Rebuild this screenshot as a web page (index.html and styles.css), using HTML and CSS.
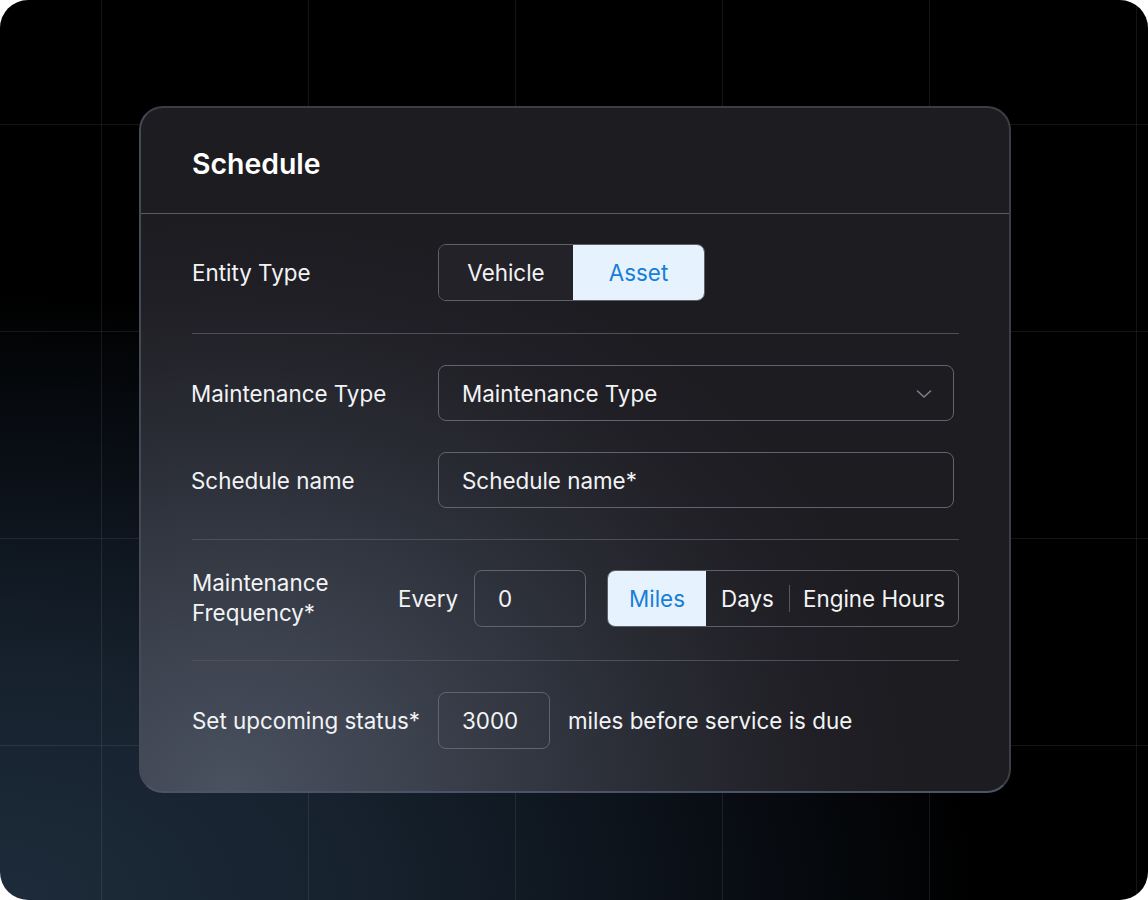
FILE: index.html
```html
<!DOCTYPE html>
<html>
<head>
<meta charset="utf-8">
<link rel="stylesheet" href="styles.css">
</head>
<body>
<div class="frame">
  <div class="card">
    <div class="card-header"><h1>Schedule</h1></div>
    <div class="card-body">
      <div class="section row">
        <div class="label">Entity Type</div>
        <div class="toggle">
          <div class="seg seg-vehicle">Vehicle</div>
          <div class="seg seg-asset active">Asset</div>
        </div>
      </div>
      <div class="section stack">
        <div class="row">
          <div class="label">Maintenance Type</div>
          <div class="field select">
            <span>Maintenance Type</span>
            <svg class="chev" width="16" height="10" viewBox="0 0 16 10"><path d="M1.5 2 L8 8 L14.5 2" fill="none" stroke="#7d7f88" stroke-width="1.6" stroke-linecap="round" stroke-linejoin="round"/></svg>
          </div>
        </div>
        <div class="row">
          <div class="label">Schedule name</div>
          <div class="field"><span>Schedule name*</span></div>
        </div>
      </div>
      <div class="section row freq">
        <div class="label label-freq">Maintenance<br>Frequency*</div>
        <div class="every">Every</div>
        <div class="field small"><span>0</span></div>
        <div class="units">
          <div class="unit active miles">Miles</div>
          <div class="unit days">Days</div>
          <div class="unit-sep"></div>
          <div class="unit hours">Engine Hours</div>
        </div>
      </div>
      <div class="section row last">
        <div class="label label-status">Set upcoming status*</div>
        <div class="field small"><span>3000</span></div>
        <div class="suffix">miles before service is due</div>
      </div>
    </div>
  </div>
</div>
</body>
</html>
```

FILE: styles.css
```css
* { box-sizing: border-box; }
html, body { margin: 0; padding: 0; background: #ffffff; }
body { font-family: Inter, "Noto Sans", "Liberation Sans", sans-serif; }

.frame {
  width: 1148px;
  height: 900px;
  border-radius: 28px;
  overflow: hidden;
  padding: 106px 0 0 139px;
  background:
    linear-gradient(to right, rgba(255,255,255,0.08) 1px, transparent 1px) 101px 0 / 207px 207px,
    linear-gradient(to bottom, rgba(255,255,255,0.08) 1px, transparent 1px) 0 124px / 207px 207px,
    radial-gradient(ellipse 95% 75% at 0% 100%, #1d2b3a 0%, #16212d 35%, #0a0f16 65%, #000000 90%),
    #000;
}

.card {
  width: 872px;
  height: 687px;
  border-radius: 24px;
  border: 2px solid #3d3e45;
  border-bottom-color: #4b5467;
  border-left-color: #454a57;
  background:
    radial-gradient(ellipse 80% 85% at 10% 100%, #4a515f 0%, #3b414d 28%, #2b2e37 58%, #201f25 85%, #1d1c21 100%);
  color: #f4f5f7;
}

.card-header {
  height: 106px;
  padding: 5px 0 0 51px;
  display: flex;
  align-items: center;
  border-bottom: 1px solid #5a5a61;
}
.card-header h1 {
  margin: 0;
  font-size: 28.4px;
  font-weight: 600;
  color: #ffffff;
}

.card-body { padding: 0 50px 0 51px; }

.section {
  border-bottom: 1px solid #4e4f57;
  padding: 30px 0 32px;
}
.section.last { border-bottom: none; padding-top: 31px; }
.stack {
  display: flex;
  flex-direction: column;
  gap: 31px;
  padding: 31px 5px 31px 0;
}

.row { display: flex; align-items: center; }

.label {
  width: 246px;
  flex: none;
  font-size: 22.4px;
  color: #f2f3f5;
}
.stack .label { margin-left: -1px; width: 247px; }

.toggle {
  display: flex;
  height: 57px;
  border: 1.5px solid #5f6068;
  border-radius: 8px;
  overflow: hidden;
}
.seg {
  display: flex;
  align-items: center;
  justify-content: center;
  font-size: 22.4px;
  color: #f2f3f5;
}
.seg-vehicle { width: 134px; background: #232228; }
.seg-asset { width: 131px; }
.active { background: #e6f3ff; color: #1a7ed6; }

.field {
  flex: 1;
  height: 57px;
  border: 1.5px solid #62646d;
  border-radius: 8px;
  display: flex;
  align-items: center;
  padding: 0 21px 0 23px;
  font-size: 22.4px;
  color: #f2f3f5;
}
.stack .field { height: 56px; }
.select { justify-content: space-between; }
.chev { margin-top: 1px; }

.freq { padding-top: 30px; padding-bottom: 33px; }
.label-freq { width: 206px; line-height: 30px; margin: -2px 0 -1px; }
.every { width: 76px; flex: none; font-size: 22.4px; color: #f2f3f5; }
.field.small { flex: none; width: 112px; }
.units {
  margin-left: 21px;
  height: 57px;
  width: 352px;
  display: flex;
  align-items: center;
  border: 1.5px solid #5f6068;
  border-radius: 8px;
  overflow: hidden;
}
.unit {
  height: 100%;
  display: flex;
  align-items: center;
  justify-content: center;
  font-size: 22.4px;
  color: #f2f3f5;
}
.unit.miles { width: 98px; color: #1a7ed6; }
.unit.days { width: 83px; }
.unit-sep { width: 1px; height: 27px; background: #55565e; }
.unit.hours { flex: 1; }

.label-status { width: 246px; }
.suffix { margin-left: 18px; font-size: 22.4px; color: #f2f3f5; }
```
